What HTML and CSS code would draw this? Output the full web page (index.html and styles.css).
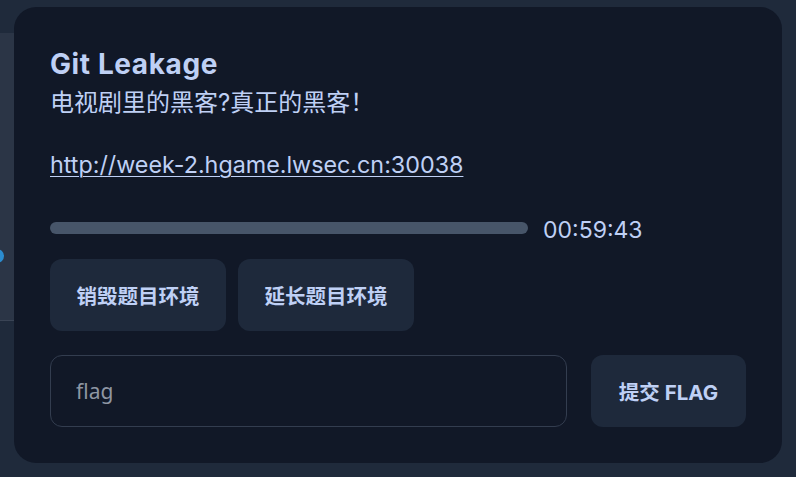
FILE: index.html
```html
<!DOCTYPE html>
<html lang="zh-CN">
<head>
<meta charset="utf-8">
<title>Git Leakage</title>
<link rel="stylesheet" href="styles.css">
</head>
<body>
<div class="page">
  <div class="side-panel"><span class="dot"></span></div>
</div>
<div class="modal">
  <h2 class="title">Git Leakage</h2>
  <p class="desc">电视剧里的黑客?真正的黑客！</p>
  <a class="link" href="#">http://week-2.hgame.lwsec.cn:30038</a>
  <div class="timer-row">
    <div class="bar"></div>
    <span class="time">00:59:43</span>
  </div>
  <div class="actions">
    <button class="btn">销毁题目环境</button>
    <button class="btn">延长题目环境</button>
  </div>
  <div class="flag-row">
    <input class="flag-input" type="text" placeholder="flag">
    <button class="btn btn-submit">提交 FLAG</button>
  </div>
</div>
</body>
</html>
```
FILE: styles.css
```css
html, body {
  margin: 0;
  padding: 0;
}
body {
  width: 796px;
  height: 477px;
  overflow: hidden;
  background: #1f2a3b;
  font-family: Inter, "Noto Sans CJK SC", sans-serif;
  color: #bfd0f5;
}
.page {
  padding-top: 33px;
}
.side-panel {
  position: relative;
  width: 300px;
  height: 287px;
  background: #2b3546;
  border-bottom: 1px solid #3a4455;
}
.dot {
  position: absolute;
  left: -10px;
  top: 216px;
  width: 14px;
  height: 14px;
  border-radius: 50%;
  background: #2b8ccf;
}
.modal {
  position: absolute;
  left: 14px;
  top: 7px;
  width: 768px;
  height: 456px;
  box-sizing: border-box;
  padding: 36px 36px 36px;
  border-radius: 22px;
  background: #111827;
  display: flex;
  flex-direction: column;
}
.title {
  margin: 0;
  font-size: 28px;
  font-weight: 700;
  line-height: 42px;
  letter-spacing: 0.6px;
}
.desc {
  margin: 2px 0 0;
  font-size: 24px;
  line-height: 32px;
}
.link {
  margin-top: 31px;
  align-self: flex-start;
  color: #bfd0f5;
  font-size: 23.3px;
  line-height: 30px;
  text-decoration: underline;
  text-underline-offset: 3px;
  text-decoration-thickness: 1px;
}
.timer-row {
  margin-top: 33px;
  display: flex;
  align-items: center;
  gap: 15px;
  height: 30px;
}
.bar {
  width: 478px;
  height: 12px;
  border-radius: 6px;
  background: #475569;
}
.time {
  margin-top: 4px;
  font-size: 23px;
  line-height: 30px;
}
.actions {
  margin-top: 16px;
  display: flex;
  gap: 12px;
}
.btn {
  height: 72px;
  padding: 0 26.5px;
  border: none;
  border-radius: 12px;
  background: #1e293b;
  color: #bfd0f5;
  font-family: Inter, "Noto Sans CJK SC", sans-serif;
  font-size: 20.5px;
  font-weight: 700;
}
.flag-row {
  margin-top: 24px;
  display: flex;
  gap: 24px;
}
.flag-input {
  width: 517px;
  height: 72px;
  box-sizing: border-box;
  padding: 0 25px;
  border: 1px solid #333d4f;
  border-radius: 12px;
  background: #111827;
  color: #bfd0f5;
  font-family: "Noto Sans", sans-serif;
  font-size: 21px;
  outline: none;
}
.flag-input::placeholder {
  color: #8e96a3;
}
.btn-submit {
  width: 155px;
  padding: 0;
}
```
